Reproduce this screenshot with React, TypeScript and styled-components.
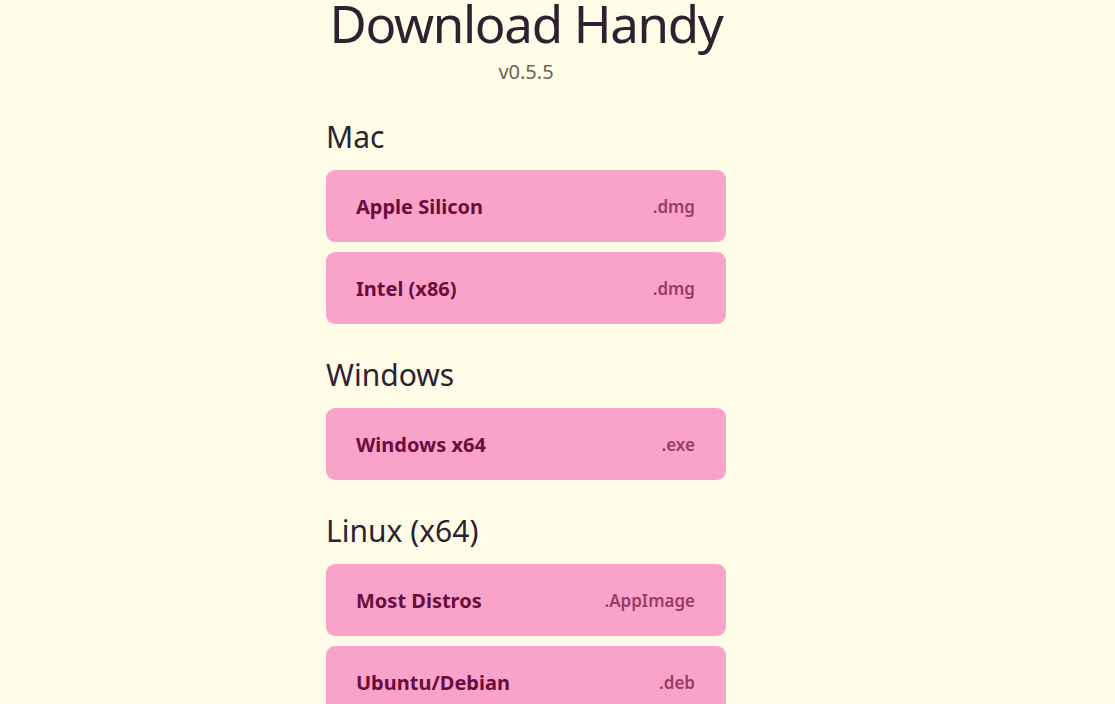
import React from 'react';
import styled, { createGlobalStyle } from 'styled-components';

const GlobalStyle = createGlobalStyle`
	body {
		margin: 0;
		padding-right: 63px;
		background: #fffde8;
		font-family: 'Noto Sans', 'Open Sans', sans-serif;
		color: #2e2230;
	}
`;

const Page = styled.main`
	width: 400px;
	margin: 0 auto;
	padding-bottom: 40px;
`;

const Title = styled.h1`
	margin: -2px -40px 0;
	font-size: 51px;
	font-weight: 400;
	letter-spacing: -1.3px;
	line-height: 1;
	white-space: nowrap;
	text-align: center;
	color: #2e2230;
`;

const Version = styled.div`
	margin-top: 9px;
	font-size: 20px;
	text-align: center;
	color: #6b625a;
`;

const Section = styled.section`
	margin-top: 35px;

	& + & {
		margin-top: 34px;
	}
`;

const Heading = styled.h2`
	margin: 0 0 17px;
	font-size: 30px;
	font-weight: 400;
	line-height: 1.1;
	color: #2e2230;
`;

const List = styled.div`
	display: flex;
	flex-direction: column;
	gap: 10px;
`;

const DownloadButton = styled.a`
	display: flex;
	align-items: center;
	justify-content: space-between;
	height: 72px;
	box-sizing: border-box;
	padding: 0 31px 0 30px;
	background: #f9a3cb;
	border-radius: 9px;
	text-decoration: none;
	cursor: pointer;
`;

const Label = styled.span`
	font-size: 20px;
	font-weight: 700;
	color: #6a0c3c;
`;

const Ext = styled.span`
	font-size: 17px;
	font-weight: 600;
	color: #9a3a68;
`;

interface Build {
	label: string;
	ext: string;
}

const sections: { name: string; builds: Build[] }[] = [
	{
		name: 'Mac',
		builds: [
			{ label: 'Apple Silicon', ext: '.dmg' },
			{ label: 'Intel (x86)', ext: '.dmg' },
		],
	},
	{
		name: 'Windows',
		builds: [{ label: 'Windows x64', ext: '.exe' }],
	},
	{
		name: 'Linux (x64)',
		builds: [
			{ label: 'Most Distros', ext: '.AppImage' },
			{ label: 'Ubuntu/Debian', ext: '.deb' },
			{ label: 'Fedora/RHEL', ext: '.rpm' },
		],
	},
];

export default function App() {
	return (
		<>
			<GlobalStyle />
			<Page>
				<Title>Download Handy</Title>
				<Version>v0.5.5</Version>
				{sections.map((s) => (
					<Section key={s.name}>
						<Heading>{s.name}</Heading>
						<List>
							{s.builds.map((b) => (
								<DownloadButton key={b.label}>
									<Label>{b.label}</Label>
									<Ext>{b.ext}</Ext>
								</DownloadButton>
							))}
						</List>
					</Section>
				))}
			</Page>
		</>
	);
}
